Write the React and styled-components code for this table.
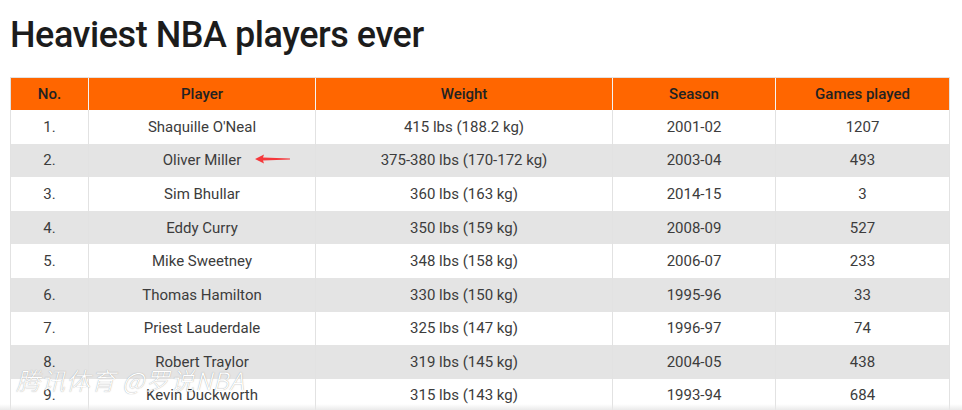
import React from 'react'
import styled, { createGlobalStyle } from 'styled-components'

const players = [
  ['1.', "Shaquille O'Neal", '415 lbs (188.2 kg)', '2001-02', '1207'],
  ['2.', 'Oliver Miller', '375-380 lbs (170-172 kg)', '2003-04', '493'],
  ['3.', 'Sim Bhullar', '360 lbs (163 kg)', '2014-15', '3'],
  ['4.', 'Eddy Curry', '350 lbs (159 kg)', '2008-09', '527'],
  ['5.', 'Mike Sweetney', '348 lbs (158 kg)', '2006-07', '233'],
  ['6.', 'Thomas Hamilton', '330 lbs (150 kg)', '1995-96', '33'],
  ['7.', 'Priest Lauderdale', '325 lbs (147 kg)', '1996-97', '74'],
  ['8.', 'Robert Traylor', '319 lbs (145 kg)', '2004-05', '438'],
  ['9.', 'Kevin Duckworth', '315 lbs (143 kg)', '1993-94', '684'],
]

const columns = [
  { label: 'No.', width: 78 },
  { label: 'Player', width: 227 },
  { label: 'Weight', width: 297 },
  { label: 'Season', width: 163 },
  { label: 'Games played', width: 174 },
]

export default function App() {
  return (
    <Page>
      <GlobalStyle />
      <Title>Heaviest NBA players ever</Title>
      <Table>
        <colgroup>
          {columns.map((c) => (
            <col key={c.label} style={{ width: c.width }} />
          ))}
        </colgroup>
        <thead>
          <tr>
            {columns.map((c) => (
              <Th key={c.label}>{c.label}</Th>
            ))}
          </tr>
        </thead>
        <tbody>
          {players.map((row, i) => (
            <Row key={row[0]} $striped={i % 2 === 1}>
              {row.map((cell, j) => (
                <Td key={j}>
                  {j === 1 && row[1] === 'Oliver Miller' ? (
                    <Marked>
                      {cell}
                      <Arrow viewBox="0 0 36 10">
                        <polygon points="0,5 9,0.5 8,3.6 35,4.6 35,5.4 8,6.4 9,9.5" fill="#f5383b" />
                      </Arrow>
                    </Marked>
                  ) : (
                    cell
                  )}
                </Td>
              ))}
            </Row>
          ))}
        </tbody>
      </Table>
      <Watermark>腾讯体育 @罗说NBA</Watermark>
      <BottomFade />
    </Page>
  )
}

const GlobalStyle = createGlobalStyle`
  html, body {
    margin: 0;
    padding: 0;
    background: #ffffff;
    overflow: hidden;
  }
  body {
    font-family: Roboto, "Liberation Sans", Arial, sans-serif;
  }
`

const Page = styled.div`
  position: relative;
  width: 962px;
  height: 410px;
  padding: 14px 12px 0 10px;
  box-sizing: border-box;
  overflow: hidden;
`

const Title = styled.h1`
  margin: 0 0 20px 0;
  font-family: Roboto, "Liberation Sans", sans-serif;
  font-weight: 500;
  font-size: 36px;
  line-height: 43px;
  color: #1c1c1c;
  letter-spacing: -0.45px;
`

const Table = styled.table`
  width: 940px;
  border-collapse: collapse;
  table-layout: fixed;
  font-family: Roboto, "Liberation Sans", sans-serif;
  font-size: 15px;
  border: 1px solid #e2e2e2;
`

const Th = styled.th`
  height: 32px;
  padding: 0 6px;
  background: #ff6600;
  color: #222222;
  font-weight: 500;
  font-size: 15px;
  text-align: center;
  border-left: 1px solid #f4f4f4;
  border-top: 1px solid #e2e2e2;
  &:first-child {
    border-left: 1px solid #e2e2e2;
  }
`

const Row = styled.tr`
  height: 33.6px;
  background: ${(p) => (p.$striped ? '#e4e4e4' : '#ffffff')};
`

const Td = styled.td`
  padding: 0 6px;
  text-align: center;
  color: #3c3c3c;
  font-weight: 400;
  border-left: 1px solid #e2e2e2;
  border-right: 1px solid #e2e2e2;
`

const Marked = styled.span`
  position: relative;
  display: inline-block;
`

const Arrow = styled.svg`
  position: absolute;
  left: 92px;
  top: 50%;
  width: 36px;
  height: 10px;
  margin-top: -6px;
`

const Watermark = styled.div`
  position: absolute;
  left: 16px;
  top: 362px;
  font-family: "Noto Sans CJK SC", "Liberation Sans", sans-serif;
  font-size: 24px;
  font-style: italic;
  font-weight: 300;
  color: #ffffff;
  letter-spacing: 1px;
  text-shadow: 0 0 1px rgba(110, 110, 110, 0.75);
  pointer-events: none;
`

const BottomFade = styled.div`
  position: absolute;
  left: 0;
  right: 0;
  bottom: 0;
  height: 6px;
  background: linear-gradient(to bottom, rgba(240, 240, 240, 0), rgba(232, 232, 232, 0.9));
  pointer-events: none;
`
